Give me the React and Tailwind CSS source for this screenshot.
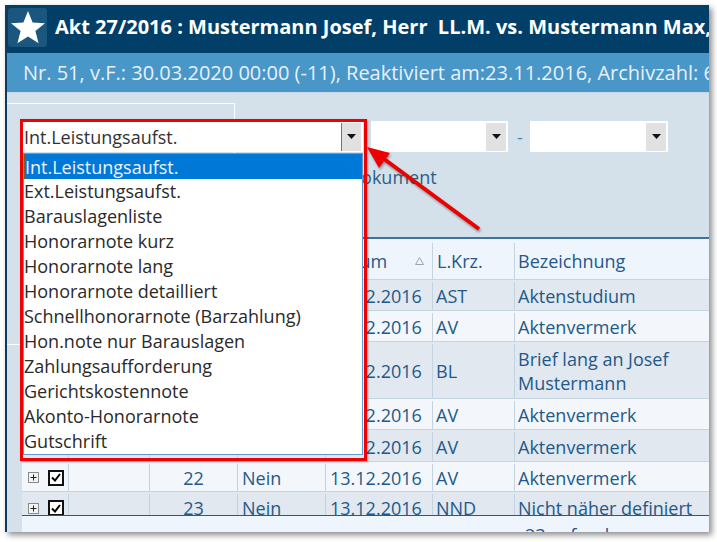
import React from 'react';

const items = [
  'Int.Leistungsaufst.',
  'Ext.Leistungsaufst.',
  'Barauslagenliste',
  'Honorarnote kurz',
  'Honorarnote lang',
  'Honorarnote detailliert',
  'Schnellhonorarnote (Barzahlung)',
  'Hon.note nur Barauslagen',
  'Zahlungsaufforderung',
  'Gerichtskostennote',
  'Akonto-Honorarnote',
  'Gutschrift',
];

const rows = [
  { nr: '17', date: '13.12.2016', krz: 'AST', text: 'Aktenstudium', h: 'h-[31px]' },
  { nr: '18', date: '13.12.2016', krz: 'AV', text: 'Aktenvermerk', h: 'h-[31px]' },
  { nr: '19', date: '13.12.2016', krz: 'BL', text: 'Brief lang an Josef Mustermann', h: 'h-[57px]' },
  { nr: '20', date: '13.12.2016', krz: 'AV', text: 'Aktenvermerk', h: 'h-[31px]' },
  { nr: '21', date: '13.12.2016', krz: 'AV', text: 'Aktenvermerk', h: 'h-[32px]' },
  { nr: '22', date: '13.12.2016', krz: 'AV', text: 'Aktenvermerk', h: 'h-[30px]' },
  { nr: '23', date: '13.12.2016', krz: 'NND', text: 'Nicht näher definiert', h: 'h-[31px]' },
];

const cols = 'grid grid-cols-[47px_81px_88px_88px_107px_82px_194px]';

function Tri() {
  return (
    <svg width="9" height="5" viewBox="0 0 9 5">
      <polygon points="0,0 9,0 4.5,5" fill="#111" />
    </svg>
  );
}

function Select({ value, w, line }) {
  return (
    <div className={`flex h-[31px] items-center bg-white ${w}`}>
      <span className="flex-1 truncate pl-[3px] text-[#333]">{value}</span>
      <span
        className={`mr-[2px] flex h-[28px] w-[20px] items-center justify-center bg-[#e1e1e1] ${line ? 'border-l border-[#4d7fae]' : ''}`}
      >
        <Tri />
      </span>
    </div>
  );
}

function Check() {
  return (
    <span className="flex h-[16px] w-[16px] items-center justify-center border-2 border-[#111] bg-white">
      <svg width="10" height="9" viewBox="0 0 10 9">
        <path d="M1 4.5 L4 7.5 L9 1" stroke="#000" strokeWidth="2" fill="none" />
      </svg>
    </span>
  );
}

function Plus() {
  return (
    <span className="flex h-[11px] w-[11px] items-center justify-center border border-[#8a8a8a] bg-[#f4f4f4]">
      <svg width="7" height="7" viewBox="0 0 7 7">
        <path d="M3.5 0.5 V6.5 M0.5 3.5 H6.5" stroke="#222" strokeWidth="1" />
      </svg>
    </span>
  );
}

export default function App() {
  return (
    <div className="relative h-[542px] w-[717px] overflow-hidden bg-white font-['Open_Sans',sans-serif] text-[18px] leading-[24px]">
      <div className="ml-[5px] mt-[5px] flex h-[527px] w-[704px] flex-col overflow-hidden border-l-2 border-[#0e3b5e] shadow-[3px_3px_6px_rgba(0,0,0,0.45)]">
        {/* title */}
        <div className="flex h-[48px] shrink-0 items-start bg-[#023f68] pt-[3px]">
          <div className="ml-[1px] flex h-[39px] w-[39px] shrink-0 items-center justify-center rounded-[3px] bg-[#1b567f]">
            <svg width="36" height="35" viewBox="0 0 36 35">
              <polygon
                points="18,1 22.6,12.6 35,13.2 25.4,21 28.6,33.2 18,26.4 7.4,33.2 10.6,21 1,13.2 13.4,12.6"
                fill="#fff"
              />
            </svg>
          </div>
          <div className="ml-[8px] mt-[5px] whitespace-nowrap text-[20px] font-bold leading-[28px] text-white">
            Akt 27/2016 : Mustermann Josef, Herr&nbsp; LL.M. vs. Mustermann Max, Herr
          </div>
        </div>
        {/* subtitle */}
        <div className="flex h-[40px] shrink-0 items-center whitespace-nowrap border-b border-[#c5d6e4] bg-[#4996c8] pl-[16px] text-[20px] text-[#e8f1f8]">
          Nr. 51, v.F.: 30.03.2020 00:00 (-11), Reaktiviert am:23.11.2016, Archivzahl: 6/2016
        </div>
        {/* body */}
        <div className="relative flex flex-1 flex-col bg-[#d4e0ea]">
          <div className="absolute left-0 top-[10px] h-[242px] w-[228px] border border-l-0 border-white" />
          <div className="relative z-30 ml-[14px] mt-[28px] flex items-center">
            <div className="relative">
              <Select value="Int.Leistungsaufst." w="w-[342px]" line />
              <div className="absolute left-[2px] top-[32px] w-[340px] border border-[#5f9bd0] bg-white">
                {items.map((it, i) => (
                  <div
                    key={it}
                    className={`h-[25px] whitespace-nowrap leading-[25px] ${i === 0 ? 'border border-dotted border-[#8a5a2a] bg-[#0078d7] leading-[23px] text-[#eef4ff]' : 'text-[#2a2a2a]'}`}
                  >
                    {it}
                  </div>
                ))}
              </div>
              <div className="absolute -left-[1px] -top-[2px] h-[342px] w-[347px] border-[3px] border-[#f00000] shadow-[1px_1px_2px_rgba(0,0,0,0.3)]" />
            </div>
            <div className="ml-[8px]">
              <Select value="" w="w-[137px]" />
            </div>
            <span className="ml-[9px] w-[13px] text-[#5a82a6]">-</span>
            <Select value="" w="w-[138px]" />
          </div>
          <div className="ml-[341px] mt-[13px] h-[24px] text-[#2d5f86]">Dokument</div>
          <div className="relative z-10 ml-[15px] mt-[48px] flex flex-1 flex-col border-t-2 border-[#3d73a0] text-[#23598a]">
            <div className={`${cols} h-[40px] bg-[#eef5fc] pt-[4px]`}>
              <div className="border-r border-[#c3d3e0]" />
              <div className="border-r border-[#c3d3e0]" />
              <div className="flex items-center justify-center border-r border-[#c3d3e0]">Nr.</div>
              <div className="flex items-center border-r border-[#c3d3e0] pl-[4px]">Erl.</div>
              <div className="flex items-center justify-between border-r border-[#c3d3e0] pl-[4px] pr-[8px]">
                <span>Datum</span>
                <svg width="9" height="8" viewBox="0 0 9 8">
                  <polygon points="4.5,0.5 8.5,7.5 0.5,7.5" fill="none" stroke="#9aa4ad" strokeWidth="1" />
                </svg>
              </div>
              <div className="flex items-center border-r border-[#c3d3e0] pl-[4px]">L.Krz.</div>
              <div className="flex items-center pl-[3px]">Bezeichnung</div>
            </div>
            <div className="h-[236px] overflow-hidden">
              {rows.map((r, i) => (
                <div
                  key={r.nr}
                  className={`${cols} ${r.h} border-t border-[#c6d5e2] pt-[2px] ${i % 2 === 0 ? 'bg-[#e1e8ef]' : 'bg-[#f3f7fb]'}`}
                >
                  <div className="flex items-center gap-[9px] border-r border-[#c3d3e0] pl-[6px]">
                    <Plus />
                    <Check />
                  </div>
                  <div className="border-r border-[#c3d3e0]" />
                  <div className="flex items-center justify-center border-r border-[#c3d3e0]">{r.nr}</div>
                  <div className="flex items-center border-r border-[#c3d3e0] pl-[4px]">Nein</div>
                  <div className="flex items-center border-r border-[#c3d3e0] pl-[4px]">{r.date}</div>
                  <div className="flex items-center border-r border-[#c3d3e0] pl-[3px]">{r.krz}</div>
                  <div className="flex items-center pl-[3px] pr-[4px]">{r.text}</div>
                </div>
              ))}
            </div>
            <div className="flex-1 border-t border-[#2b5a80] bg-[#eef5fc] pl-[503px] pt-[7px]">23 gefunden</div>
          </div>
        </div>
      </div>
      <svg className="absolute left-0 top-0 z-40 drop-shadow-[1px_2px_1px_rgba(0,0,0,0.35)]" width="717" height="542">
        <line x1="479" y1="229" x2="380" y2="156" stroke="#ee0000" strokeWidth="4" />
        <polygon points="367,147 390,153 379,168" fill="#ee0000" />
      </svg>
    </div>
  );
}
